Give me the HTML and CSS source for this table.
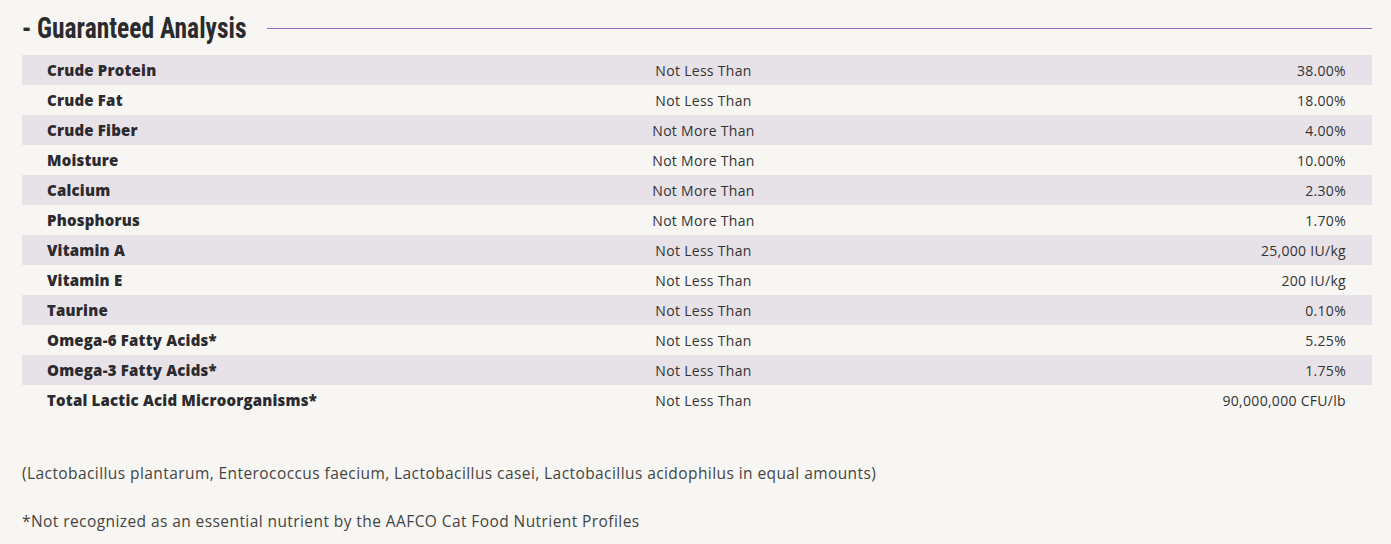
FILE: index.html
```html
<!DOCTYPE html>
<html>
<head>
<meta charset="utf-8">
<link rel="stylesheet" href="styles.css">
</head>
<body>
<section class="ga">
  <div class="ga-head">
    <h2 class="ga-title"><span class="ga-title-text">- Guaranteed Analysis</span></h2>
    <div class="ga-rule"></div>
  </div>
  <div class="ga-table">
    <div class="row"><span class="name">Crude Protein</span><span class="cmp">Not Less Than</span><span class="val">38.00%</span></div>
    <div class="row"><span class="name">Crude Fat</span><span class="cmp">Not Less Than</span><span class="val">18.00%</span></div>
    <div class="row"><span class="name">Crude Fiber</span><span class="cmp">Not More Than</span><span class="val">4.00%</span></div>
    <div class="row"><span class="name">Moisture</span><span class="cmp">Not More Than</span><span class="val">10.00%</span></div>
    <div class="row"><span class="name">Calcium</span><span class="cmp">Not More Than</span><span class="val">2.30%</span></div>
    <div class="row"><span class="name">Phosphorus</span><span class="cmp">Not More Than</span><span class="val">1.70%</span></div>
    <div class="row"><span class="name">Vitamin A</span><span class="cmp">Not Less Than</span><span class="val">25,000 IU/kg</span></div>
    <div class="row"><span class="name">Vitamin E</span><span class="cmp">Not Less Than</span><span class="val">200 IU/kg</span></div>
    <div class="row"><span class="name">Taurine</span><span class="cmp">Not Less Than</span><span class="val">0.10%</span></div>
    <div class="row"><span class="name">Omega-6 Fatty Acids*</span><span class="cmp">Not Less Than</span><span class="val">5.25%</span></div>
    <div class="row"><span class="name">Omega-3 Fatty Acids*</span><span class="cmp">Not Less Than</span><span class="val">1.75%</span></div>
    <div class="row"><span class="name">Total Lactic Acid Microorganisms*</span><span class="cmp">Not Less Than</span><span class="val">90,000,000 CFU/lb</span></div>
  </div>
  <p class="note note-first">(Lactobacillus plantarum, Enterococcus faecium, Lactobacillus casei, Lactobacillus acidophilus in equal amounts)</p>
  <p class="note">*Not recognized as an essential nutrient by the AAFCO Cat Food Nutrient Profiles</p>
</section>
</body>
</html>
```
FILE: styles.css
```css
html, body {
  margin: 0;
  padding: 0;
  background: #f7f6f3;
}
body {
  font-family: "Open Sans", "Noto Sans", sans-serif;
  color: #2f2f33;
}
.ga {
  padding: 10px 19px 0 22px;
}
.ga-head {
  display: flex;
  align-items: center;
  gap: 21px;
  height: 36px;
  margin-bottom: 9px;
}
.ga-title {
  margin: 0;
  width: 224px;
  flex: none;
  font-family: "Roboto Condensed", "DejaVu Sans Condensed", sans-serif;
  font-weight: bold;
  font-size: 30px;
  line-height: 36px;
  color: #2b2a2e;
  white-space: nowrap;
}
.ga-title-text {
  display: inline-block;
  transform: scaleX(0.85);
  transform-origin: left center;
}
.ga-rule {
  flex: 1;
  height: 1px;
  background: #9b65bd;
}
.ga-table {
  display: flex;
  flex-direction: column;
}
.row {
  display: grid;
  grid-template-columns: 584px 1fr 570px;
  align-items: center;
  height: 30px;
  padding: 0 26px 0 25px;
}
.row:nth-child(odd) {
  background: #e7e1e8;
}
.name {
  font-weight: 800;
  font-size: 15px;
  letter-spacing: 0.2px;
  color: #2b2a2e;
}
.cmp {
  text-align: center;
  font-size: 14px;
  letter-spacing: 0.3px;
  color: #333;
}
.val {
  text-align: right;
  font-size: 14px;
  letter-spacing: 0.3px;
  color: #333;
}
.note {
  margin: 0;
  font-size: 15.5px;
  letter-spacing: 0.42px;
  color: #444;
}
.note-first {
  margin-top: 47px;
  margin-bottom: 26px;
}
```
